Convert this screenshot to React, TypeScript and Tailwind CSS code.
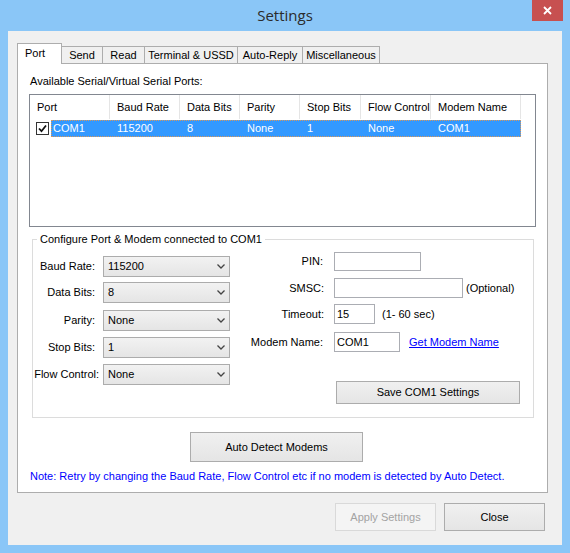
import React from "react";

const tabs = [
  { label: "Port", w: "w-[45px]", active: true },
  { label: "Send", w: "w-[41px]" },
  { label: "Read", w: "w-[42px]" },
  { label: "Terminal & USSD", w: "w-[93px]" },
  { label: "Auto-Reply", w: "w-[65px]" },
  { label: "Miscellaneous", w: "w-[77px]" },
];

const columns = [
  { label: "Port", w: "w-[80px]", value: "COM1" },
  { label: "Baud Rate", w: "w-[70px]", value: "115200" },
  { label: "Data Bits", w: "w-[60px]", value: "8" },
  { label: "Parity", w: "w-[60px]", value: "None" },
  { label: "Stop Bits", w: "w-[61px]", value: "1" },
  { label: "Flow Control", w: "w-[70px]", value: "None" },
  { label: "Modem Name", w: "w-[90px]", value: "COM1" },
];

const combos = [
  { label: "Baud Rate:", value: "115200", mt: "mt-[16px]", gap: "gap-[8px]" },
  { label: "Data Bits:", value: "8", mt: "mt-[5px]", gap: "gap-[8px]" },
  { label: "Parity:", value: "None", mt: "mt-[7px]", gap: "gap-[8px]" },
  { label: "Stop Bits:", value: "1", mt: "mt-[6px]", gap: "gap-[8px]" },
  { label: "Flow Control:", value: "None", mt: "mt-[6px]", gap: "gap-[4px]" },
];

function Combo({ value }: { value: string }) {
  return (
    <div className="w-[127px] h-[21px] flex items-center justify-between pl-[4px] pr-[4px] border border-[#acacac] bg-gradient-to-b from-[#f2f2f2] to-[#e5e5e5]">
      <span>{value}</span>
      <svg width="8" height="5" viewBox="0 0 8 5">
        <polyline points="0.5,0.5 4,4 7.5,0.5" fill="none" stroke="#444" strokeWidth="1.3" />
      </svg>
    </div>
  );
}

function TextBox({ w, h, value }: { w: string; h: string; value?: string }) {
  return (
    <div className={`${w} ${h} border border-[#abadb3] bg-white flex items-center pl-[2px]`}>
      {value}
    </div>
  );
}

function Button({ label, className, disabled }: { label: string; className: string; disabled?: boolean }) {
  return (
    <button
      className={`${className} flex items-center justify-center border ${
        disabled
          ? "border-[#d9d9d9] bg-[#f4f4f4] text-[#a3a3a3]"
          : "border-[#acacac] bg-gradient-to-b from-[#f0f0f0] to-[#e5e5e5] text-black"
      }`}
    >
      {label}
    </button>
  );
}

export default function App() {
  return (
    <div
      className="w-[570px] h-[553px] bg-[#8ac6f7] flex flex-col text-[11px] leading-[13px] text-black"
      style={{ fontFamily: '"Liberation Sans", Arial, sans-serif' }}
    >
      {/* title bar */}
      <div className="h-[31px] relative flex items-center justify-center">
        <span
          className="text-[15px] text-[#2b2b2b] -mt-[1px]"
          style={{ fontFamily: '"Open Sans", "Noto Sans", sans-serif' }}
        >
          Settings
        </span>
        <div className="absolute right-[7px] top-0 w-[31px] h-[21px] bg-[#c75050] flex items-center justify-center">
          <svg width="9" height="9" viewBox="0 0 9 9">
            <path d="M1 1 L8 8 M8 1 L1 8" stroke="white" strokeWidth="1.8" />
          </svg>
        </div>
      </div>

      {/* client area */}
      <div className="mx-[8px] w-[554px] h-[514px] bg-[#f0f0f0] flex flex-col">
        {/* tabs */}
        <div className="flex items-end h-[21px] mt-[12px] ml-[9px] relative z-10">
          {tabs.map((t) =>
            t.active ? (
              <div
                key={t.label}
                className={`${t.w} h-[21px] bg-white border-x border-t border-[#adadad] pl-[7px] pt-[3px]`}
              >
                {t.label}
              </div>
            ) : (
              <div
                key={t.label}
                className={`${t.w} h-[18px] bg-[#f0f0f0] border border-l-0 border-[#adadad] flex items-center justify-center whitespace-nowrap`}
              >
                {t.label}
              </div>
            )
          )}
        </div>

        {/* tab panel */}
        <div className="-mt-px ml-[9px] w-[531px] h-[430px] bg-white border border-[#adadad] flex flex-col">
          <div className="mt-[11px] ml-[12px]">Available Serial/Virtual Serial Ports:</div>

          {/* list view */}
          <div className="mt-[6px] ml-[11px] w-[507px] h-[133px] border border-[#828790] flex flex-col">
            <div className="flex h-[24px]">
              {columns.map((c) => (
                <div key={c.label} className={`${c.w} border-r border-[#e5e5e5] flex items-center pl-[7px] whitespace-nowrap`}>
                  {c.label}
                </div>
              ))}
            </div>
            <div className="flex h-[17px] mt-px">
              <div className="w-[6px]" />
              <div className="w-[13px] h-[13px] mt-[2px] border border-[#333] bg-white flex items-center justify-center">
                <svg width="9" height="9" viewBox="0 0 9 9">
                  <polyline points="1,4.5 3.5,7.2 8,1.5" fill="none" stroke="#111" strokeWidth="1.8" />
                </svg>
              </div>
              <div className="ml-[2px] flex bg-[#3399ff] text-white outline-1 outline-dotted outline-[#d9975a] -outline-offset-1">
                <div className="w-[59px] pl-[2px] flex items-center">COM1</div>
                {columns.slice(1).map((c) => (
                  <div key={c.label} className={`${c.w} pl-[7px] flex items-center`}>
                    {c.value}
                  </div>
                ))}
              </div>
            </div>
          </div>

          {/* group box */}
          <div className="relative mt-[12px] ml-[14px] w-[502px] h-[179px] border border-[#dcdcdc] flex">
            <span className="absolute left-[4px] -top-[7px] bg-white px-[3px]">
              Configure Port &amp; Modem connected to COM1
            </span>

            <div className="w-[197px] flex flex-col">
              {combos.map((c) => (
                <div key={c.label} className={`${c.mt} ${c.gap} flex items-center justify-end`}>
                  <span className="whitespace-nowrap">{c.label}</span>
                  <Combo value={c.value} />
                </div>
              ))}
            </div>

            <div className="ml-[10px] flex flex-col">
              <div className="mt-[12px] flex items-center">
                <span className="w-[83px] text-right">PIN:</span>
                <div className="ml-[11px]">
                  <TextBox w="w-[87px]" h="h-[19px]" />
                </div>
              </div>
              <div className="mt-[7px] flex items-center">
                <span className="w-[84px] text-right">SMSC:</span>
                <div className="ml-[10px]">
                  <TextBox w="w-[129px]" h="h-[20px]" />
                </div>
                <span className="ml-[3px]">(Optional)</span>
              </div>
              <div className="mt-[6px] flex items-center">
                <span className="w-[84px] text-right">Timeout:</span>
                <div className="ml-[10px]">
                  <TextBox w="w-[41px]" h="h-[20px]" value="15" />
                </div>
                <span className="ml-[7px]">(1- 60 sec)</span>
              </div>
              <div className="mt-[8px] flex items-center">
                <span className="w-[83px] text-right whitespace-nowrap">Modem Name:</span>
                <div className="ml-[11px]">
                  <TextBox w="w-[66px]" h="h-[20px]" value="COM1" />
                </div>
                <span className="ml-[9px] text-[#0000ff] underline">Get Modem Name</span>
              </div>
              <div className="mt-[29px] ml-[96px]">
                <Button label="Save COM1 Settings" className="w-[184px] h-[23px]" />
              </div>
            </div>
          </div>

          <div className="mt-[14px] ml-[172px]">
            <Button label="Auto Detect Modems" className="w-[173px] h-[30px]" />
          </div>
          <div className="mt-[8px] ml-[12px] text-[#0000ff]">
            Note: Retry by changing the Baud Rate, Flow Control etc if no modem is detected by Auto Detect.
          </div>
        </div>

        {/* footer buttons */}
        <div className="mt-[10px] pr-[17px] flex justify-end gap-[8px]">
          <Button label="Apply Settings" className="w-[101px] h-[28px]" disabled />
          <Button label="Close" className="w-[101px] h-[28px]" />
        </div>
      </div>
    </div>
  );
}
